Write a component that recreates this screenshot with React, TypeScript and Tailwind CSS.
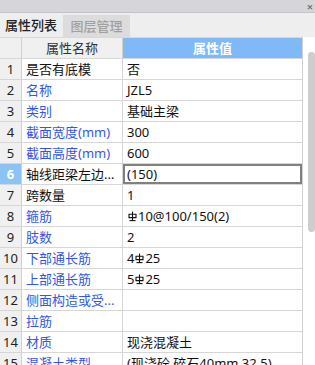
import React from 'react'

type Row = { name: string; value: React.ReactNode; blue?: boolean }

// rebar grade symbol (HRB400)
function Rebar() {
  return (
    <svg width="9" height="11" viewBox="0 0 9 11" className="inline-block align-[-1px] mx-[1px]">
      <line x1="4.5" y1="0.5" x2="4.5" y2="9.5" stroke="#111" strokeWidth="1.1" />
      <path d="M1 3.2 H8 V6.6 H1 Z" fill="none" stroke="#111" strokeWidth="1.1" />
      <line x1="1.5" y1="9.6" x2="7.5" y2="9.6" stroke="#111" strokeWidth="1.1" />
    </svg>
  )
}

const rows: Row[] = [
  { name: '是否有底模', value: '否' },
  { name: '名称', value: 'JZL5', blue: true },
  { name: '类别', value: '基础主梁', blue: true },
  { name: '截面宽度(mm)', value: '300', blue: true },
  { name: '截面高度(mm)', value: '600', blue: true },
  { name: '轴线距梁左边...', value: '(150)' },
  { name: '跨数量', value: '1' },
  { name: '箍筋', value: <><Rebar />10@100/150(2)</>, blue: true },
  { name: '肢数', value: '2', blue: true },
  { name: '下部通长筋', value: <>4<Rebar />25</>, blue: true },
  { name: '上部通长筋', value: <>5<Rebar />25</>, blue: true },
  { name: '侧面构造或受...', value: '', blue: true },
  { name: '拉筋', value: '', blue: true },
  { name: '材质', value: '现浇混凝土', blue: true },
  { name: '混凝土类型', value: '(现浇砼 碎石40mm 32.5)', blue: true },
]

export default function App() {
  const font = { fontFamily: '"Noto Sans", "Noto Sans CJK SC", sans-serif' }
  return (
    <div className="w-[315px] h-[365px] overflow-hidden bg-white text-[13px] leading-none" style={font}>
      <div className="h-[13px] bg-[#d6d6da] border-b border-[#c4c4c8] flex items-center justify-end pr-[2px]">
        <span className="text-[11px] text-[#777] font-bold leading-none">×</span>
      </div>
      <div className="h-[24px] bg-[#eeeeee] flex items-end gap-[1px]">
        <div className="h-[23px] w-[62px] flex items-center justify-center text-[#222] bg-[#eeeeee] font-medium">属性列表</div>
        <div className="h-[22px] w-[67px] flex items-center justify-center text-[#a0a0a0] bg-[#dcdcdc] font-medium">图层管理</div>
      </div>
      <div className="flex">
        <div className="w-[303px] border-r border-[#d0d0d0]">
          <div className="grid grid-cols-[22px_101px_1fr] h-[21px] border-t border-[#d8d8d8]">
            <div className="bg-[#f0f0f0] border-r border-[#d0d0d0]" />
            <div className="bg-[#f0f0f0] border-r border-[#d0d0d0] flex items-center justify-center text-[#333]">属性名称</div>
            <div className="bg-[#80b9f8] flex items-center justify-center text-white font-bold">属性值</div>
          </div>
          {rows.map((r, i) => {
            const sel = i === 5
            return (
              <div key={i} className="grid grid-cols-[22px_101px_1fr] h-[21px] border-t border-[#d6d6d6]">
                <div
                  className={
                    sel
                      ? 'bg-[#8cc2f4] border-r border-[#d0d0d0] flex items-center justify-center text-white font-bold'
                      : 'bg-[#f0f0f0] border-r border-[#d0d0d0] flex items-center justify-center text-[#222]'
                  }
                >
                  {i + 1}
                </div>
                <div
                  className={
                    r.blue
                      ? 'border-r border-[#d6d6d6] flex items-center pl-[4px] text-[#3358e0] whitespace-nowrap overflow-hidden'
                      : 'border-r border-[#d6d6d6] flex items-center pl-[4px] text-[#111] whitespace-nowrap overflow-hidden'
                  }
                >
                  {r.name}
                </div>
                <div
                  className={
                    sel
                      ? 'border-2 border-[#808080] flex items-center pl-[2px] text-[#111] whitespace-nowrap overflow-hidden'
                      : 'flex items-center pl-[4px] text-[#111] whitespace-nowrap overflow-hidden'
                  }
                >
                  {r.value}
                </div>
              </div>
            )
          })}
        </div>
        <div className="w-[12px] relative">
          <div className="absolute left-[5px] right-0 top-[15px] h-[180px] bg-[#cdcdcd] rounded-[4px]" />
        </div>
      </div>
    </div>
  )
}
